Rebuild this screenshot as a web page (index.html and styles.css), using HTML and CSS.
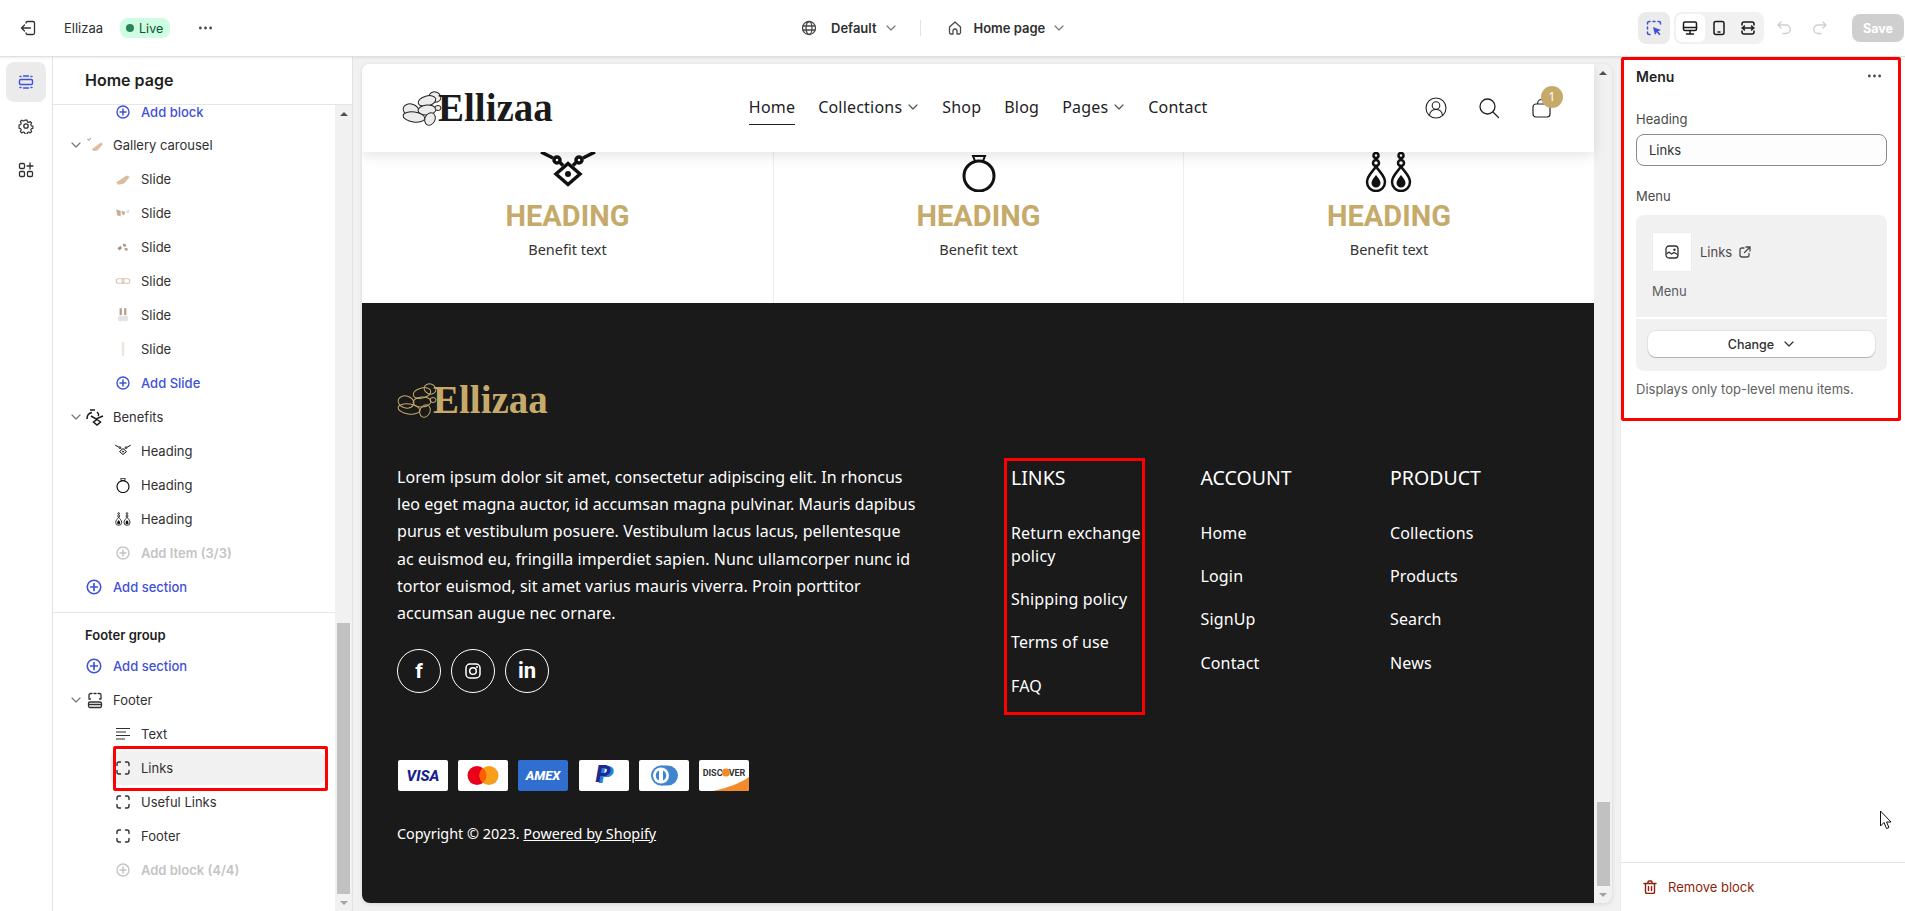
FILE: index.html
```html
<!DOCTYPE html>
<html lang="en">
<head>
    <meta charset="UTF-8">
    <meta name="viewport" content="width=device-width, initial-scale=1.0">
    <title>Ellizaa - Home page</title>
    <link rel="stylesheet" href="styles.css">
</head>
<body>
    <!-- shared icons -->
    <svg class="icon-sprite" aria-hidden="true">
        <symbol id="i-plus" viewBox="0 0 16 16"><circle cx="8" cy="8" r="6" fill="none" stroke="currentColor" stroke-width="1.400"/><path d="M8 5v6M5 8h6" fill="none" stroke="currentColor" stroke-width="1.500" stroke-linecap="round"/></symbol>
        <symbol id="i-chev" viewBox="0 0 12 12"><path d="M2 4l4 4 4-4" fill="none" stroke="currentColor" stroke-width="1.200" stroke-linecap="round" stroke-linejoin="round"/></symbol>
        <symbol id="i-block" viewBox="0 0 16 16"><path d="M2 5.500V4a2 2 0 0 1 2-2h1.500M10.500 2H12a2 2 0 0 1 2 2v1.500M14 10.500V12a2 2 0 0 1-2 2h-1.500M5.500 14H4a2 2 0 0 1-2-2v-1.500" fill="none" stroke="currentColor" stroke-width="1.400" stroke-linecap="round"/></symbol>
        <symbol id="i-dots" viewBox="0 0 16 4"><circle cx="2.500" cy="2" r="1.500" fill="currentColor"/><circle cx="8" cy="2" r="1.500" fill="currentColor"/><circle cx="13.500" cy="2" r="1.500" fill="currentColor"/></symbol>
        <symbol id="i-jewel" viewBox="0 0 40 36"><g stroke="currentColor" stroke-width="1"><ellipse cx="33" cy="7" rx="6" ry="5" transform="rotate(20 33 7)"/><ellipse cx="25" cy="11" rx="9" ry="5" transform="rotate(-15 25 11)"/><ellipse cx="9" cy="20" rx="8" ry="6" transform="rotate(15 9 20)"/><ellipse cx="25" cy="20" rx="9" ry="5" transform="rotate(-5 25 20)"/><ellipse cx="12" cy="27" rx="11" ry="5" transform="rotate(8 12 27)"/><ellipse cx="28" cy="29" rx="5" ry="6.500" transform="rotate(25 28 29)"/><ellipse cx="36" cy="18" rx="3" ry="2.500"/></g></symbol>
        <symbol id="i-necklace" viewBox="0 0 56 40"><g fill="none" stroke="currentColor" stroke-width="3.500"><path d="M1 0l12 6M55 0L43 6"/><circle cx="17" cy="8" r="3"/><circle cx="39" cy="8" r="3"/><path d="M20 10.500l3 3M36 10.500l-3 3"/><path d="M28 11.500l12 10.500-12 10.500-12-10.500z"/></g><circle cx="28" cy="22" r="3" fill="currentColor"/></symbol>
        <symbol id="i-ring" viewBox="0 0 40 40"><g fill="none" stroke="currentColor" stroke-width="3"><circle cx="20" cy="24" r="15"/><path d="M14 4h12l-2 5h-8z" stroke-width="2"/><path d="M17 9l-3 2M23 9l3 2" stroke-width="2"/></g></symbol>
        <symbol id="i-earrings" viewBox="0 0 48 40"><g fill="none" stroke="currentColor" stroke-width="2.500"><circle cx="11" cy="3.500" r="2.500"/><circle cx="11" cy="11" r="3"/><path d="M11 14.500c-4 6-9 9.500-9 15.500a9 9 0 0 0 18 0c0-6-5-9.500-9-15.500z"/><circle cx="36" cy="3.500" r="2.500"/><circle cx="36" cy="11" r="3"/><path d="M36 14.500c-4 6-9 9.500-9 15.500a9 9 0 0 0 18 0c0-6-5-9.500-9-15.500z"/></g><path d="M11 23c-2 3-4.500 5-4.500 8a4.500 4.500 0 0 0 9 0c0-3-2.500-5-4.500-8zM36 23c-2 3-4.500 5-4.500 8a4.500 4.500 0 0 0 9 0c0-3-2.500-5-4.500-8z" fill="currentColor"/></symbol>
    </svg>

    <header class="topbar">
        <div class="topbar-left">
            <svg class="ico-16" viewBox="0 0 16 16"><path d="M6 3V2.800A1.500 1.500 0 0 1 7.500 1.500h5.500A1.500 1.500 0 0 1 14.500 3v10a1.500 1.500 0 0 1-1.500 1.500H7.500A1.500 1.500 0 0 1 6 13M10.500 8H1.500M4.500 5l-3 3 3 3" fill="none" stroke="#303030" stroke-width="1.300" stroke-linecap="round" stroke-linejoin="round"/></svg>
            <span class="store-name">Ellizaa</span>
            <span class="live-badge"><i class="live-dot"></i>Live</span>
            <svg class="topbar-dots"><use href="#i-dots"/></svg>
        </div>
        <div class="topbar-center">
            <svg class="ico-16" viewBox="0 0 16 16"><g fill="none" stroke="#4a4a4a" stroke-width="1.300"><circle cx="8" cy="8" r="6.500"/><ellipse cx="8" cy="8" rx="3" ry="6.500"/><path d="M1.500 6h13M1.500 10h13"/></g></svg>
            <span class="picker-label picker-first">Default</span>
            <svg class="picker-chev"><use href="#i-chev"/></svg>
            <i class="picker-sep"></i>
            <svg class="ico-16" viewBox="0 0 16 16"><path d="M6 14H4a1.500 1.500 0 0 1-1.500-1.500V7L8 2l5.500 5v5.500A1.500 1.500 0 0 1 12 14h-2v-3a2 2 0 0 0-4 0z" fill="none" stroke="#4a4a4a" stroke-width="1.300" stroke-linejoin="round"/></svg>
            <span class="picker-label picker-second">Home page</span>
            <svg class="picker-chev"><use href="#i-chev"/></svg>
        </div>
        <div class="topbar-right">
            <button class="select-btn"><svg class="ico-16" viewBox="0 0 16 16"><path d="M1.500 4V3A1.500 1.500 0 0 1 3 1.500h1M7 1.500h2M12 1.500h1A1.500 1.500 0 0 1 14.500 3v1M1.500 7v2M1.500 12v1A1.500 1.500 0 0 0 3 14.500h1" fill="none" stroke="#3f51d8" stroke-width="1.500" stroke-linecap="round"/><path d="M7 7l8 3-3 1.300 2.500 3-1.200 1-2.500-3L9 15z" fill="#3f51d8"/></svg></button>
            <div class="view-group">
                <button class="view-btn view-on"><svg class="ico-16" viewBox="0 0 16 16"><rect x="1.500" y="2" width="13" height="8.500" rx="1.500" fill="none" stroke="#1a1a1a" stroke-width="1.500"/><path d="M1.500 7.500h13M8 10.500v3M4.500 14h7" stroke="#1a1a1a" stroke-width="1.500" fill="none" stroke-linecap="round"/></svg></button>
                <button class="view-btn"><svg class="ico-16" viewBox="0 0 16 16"><rect x="3" y="1.500" width="10" height="13" rx="2" fill="none" stroke="#1a1a1a" stroke-width="1.500"/><path d="M6.500 12h3" stroke="#1a1a1a" stroke-width="1.500"/></svg></button>
                <button class="view-btn"><svg class="ico-16" viewBox="0 0 16 16"><path d="M2 5V4a2 2 0 0 1 2-2h8a2 2 0 0 1 2 2v1M2 11v1a2 2 0 0 0 2 2h8a2 2 0 0 0 2-2v-1M2 8h12M4.500 6L2.500 8l2 2M11.500 6l2 2-2 2" fill="none" stroke="#1a1a1a" stroke-width="1.500" stroke-linecap="round" stroke-linejoin="round"/></svg></button>
            </div>
            <svg class="ico-16 undo-ico" viewBox="0 0 16 16"><path d="M5 2L2 5l3 3M2.500 5H10a4 4 0 0 1 0 8.500H7" fill="none" stroke="#cfcfcf" stroke-width="1.400" stroke-linecap="round" stroke-linejoin="round"/></svg>
            <svg class="ico-16 redo-ico" viewBox="0 0 16 16"><path d="M11 2l3 3-3 3M13.500 5H6a4 4 0 0 0 0 8.500h3" fill="none" stroke="#cfcfcf" stroke-width="1.400" stroke-linecap="round" stroke-linejoin="round"/></svg>
            <button class="save-btn">Save</button>
        </div>
    </header>

    <div class="editor">
        <nav class="rail">
            <button class="rail-btn rail-on"><svg class="ico-16" viewBox="0 0 16 16"><rect x="1.500" y="5.500" width="13" height="5" rx="1.200" fill="none" stroke="#3f51d8" stroke-width="1.400"/><path d="M2 2.500h1M5.500 2h5M13 2.500h1M2 13.500h1M5.500 14h5M13 13.500h1" stroke="#3f51d8" stroke-width="1.400" stroke-linecap="round"/></svg></button>
            <button class="rail-btn"><svg class="ico-16" viewBox="0 0 16 16"><g fill="none" stroke="#303030" stroke-width="1.300" stroke-linejoin="round"><circle cx="8" cy="8" r="2.200"/><path d="M6.800 1.500h2.400l.4 1.900 1.400.6 1.700-1 1.600 1.700-1 1.600.6 1.500 1.800.4v2.400l-1.800.4-.6 1.400 1 1.700-1.600 1.600-1.700-1-1.400.6-.4 1.800H6.800l-.4-1.800-1.400-.6-1.700 1-1.600-1.600 1-1.700-.6-1.400-1.800-.4V6.700l1.800-.4.600-1.500-1-1.600 1.600-1.700 1.700 1 1.400-.6z" transform="translate(.8 .8) scale(.9)"/></g></svg></button>
            <button class="rail-btn"><svg class="ico-16" viewBox="0 0 16 16"><g fill="none" stroke="#303030" stroke-width="1.300"><rect x="1.500" y="1.500" width="5" height="5" rx="1.200"/><rect x="1.500" y="9.500" width="5" height="5" rx="1.200"/><rect x="9.500" y="9.500" width="5" height="5" rx="1.200"/><path d="M12 1v6M9 4h6" stroke-linecap="round"/></g></svg></button>
        </nav>

        <aside class="sidebar">
            <h2 class="sidebar-title">Home page</h2>
            <div class="tree-wrap">
                <div class="tree">
                    <div class="tree-list">
                        <div class="row row-add row-sub row-clipped"><svg class="row-ico"><use href="#i-plus"/></svg>Add block</div>
                        <div class="row row-section"><svg class="row-chev"><use href="#i-chev"/></svg><svg class="sec-ico" viewBox="0 0 18 14"><path d="M1.500 1l2 1.500M4 0l.5 1.500" stroke="#b79a78" stroke-width="1.200"/><path d="M6 11l9-6.500 2 1.500-5.500 6.500-4.500.5z" fill="#dcbfa3"/></svg>Gallery carousel</div>
                        <div class="row row-block"><svg class="row-ico" viewBox="0 0 14 14"><path d="M1 10l9-6 3 1-5 6-5 1z" fill="#d9bda2"/></svg>Slide</div>
                        <div class="row row-block"><svg class="row-ico" viewBox="0 0 14 14"><path d="M1 4l4 1v5l-3-1zM6 5l3 1-1 3-2-1z" fill="#c9ad96"/><path d="M10 5l3-1-1 3-2 0z" fill="#ddd"/></svg>Slide</div>
                        <div class="row row-block"><svg class="row-ico" viewBox="0 0 14 14"><path d="M2 8l3-2 1 2-2 2zM7 4l3 1-1 2-2-1zM8 8l3 0 0 2-2 0z" fill="#a99384"/></svg>Slide</div>
                        <div class="row row-block"><svg class="row-ico" viewBox="0 0 14 14"><g fill="none" stroke="#dbc6b3"><rect x="1" y="5" width="7" height="4" rx="2"/><rect x="6" y="5" width="7" height="4" rx="2"/></g></svg>Slide</div>
                        <div class="row row-block"><svg class="row-ico" viewBox="0 0 14 14"><path d="M4 1h2v6H4zM8 1h2v6H8z" fill="#b99d87"/><circle cx="5" cy="10" r="2.500" fill="#e3e3e3"/><circle cx="9" cy="10" r="2.500" fill="#e3e3e3"/></svg>Slide</div>
                        <div class="row row-block"><svg class="row-ico" viewBox="0 0 14 14"><path d="M6 1h2v12H6z" fill="#f0e3da"/></svg>Slide</div>
                        <div class="row row-add row-sub"><svg class="row-ico"><use href="#i-plus"/></svg>Add Slide</div>
                        <div class="row row-section"><svg class="row-chev"><use href="#i-chev"/></svg><svg class="sec-ico bene-ico" viewBox="0 0 18 18"><g fill="none" stroke="#1a1a1a" stroke-width="1.500"><path d="M1 11c0-4 2-6 5-6.500M4 2h5M11 4c2 2 2 3 1 4"/><path d="M5 8l5 3 7-3M11 11.500l3.500 2.500-3.500 3-3.500-3z"/></g></svg>Benefits</div>
                        <div class="row row-block"><svg class="row-ico bene-ico"><use href="#i-necklace"/></svg>Heading</div>
                        <div class="row row-block"><svg class="row-ico bene-ico"><use href="#i-ring"/></svg>Heading</div>
                        <div class="row row-block"><svg class="row-ico bene-ico"><use href="#i-earrings"/></svg>Heading</div>
                        <div class="row row-add row-sub row-off"><svg class="row-ico"><use href="#i-plus"/></svg>Add Item (3/3)</div>
                        <div class="row row-add"><svg class="sec-ico"><use href="#i-plus"/></svg>Add section</div>
                    </div>
                    <h3 class="group-title">Footer group</h3>
                    <div class="row row-add"><svg class="sec-ico"><use href="#i-plus"/></svg>Add section</div>
                    <div class="row row-section"><svg class="row-chev"><use href="#i-chev"/></svg><svg class="sec-ico" viewBox="0 0 18 18"><path d="M3 8V4A1.500 1.500 0 0 1 4.500 2.500H6M12 2.500h1.500A1.500 1.500 0 0 1 15 4v4M8 2.500h2M3 8h1.500M13.500 8H15M4 11h10a1.500 1.500 0 0 1 1.500 1.500V15a1.500 1.500 0 0 1-1.500 1.500H4A1.500 1.500 0 0 1 2.500 15v-2.500A1.500 1.500 0 0 1 4 11zM2.500 13.500h13" fill="none" stroke="#303030" stroke-width="1.300" stroke-linecap="round"/></svg>Footer</div>
                    <div class="row row-block"><svg class="row-ico" viewBox="0 0 16 16"><path d="M1 2.500h14M1 6h10M1 9.500h14M1 13h9" stroke="#303030" stroke-width="1.200"/></svg>Text</div>
                    <div class="row row-block row-current"><svg class="row-ico"><use href="#i-block"/></svg>Links<span class="red-mark"></span></div>
                    <div class="row row-block"><svg class="row-ico"><use href="#i-block"/></svg>Useful Links</div>
                    <div class="row row-block"><svg class="row-ico"><use href="#i-block"/></svg>Footer</div>
                    <div class="row row-add row-sub row-off"><svg class="row-ico"><use href="#i-plus"/></svg>Add block (4/4)</div>
                </div>
                <div class="scrollbar tree-scroll">
                    <i class="arrow-up"></i>
                    <i class="scroll-thumb"></i>
                    <i class="arrow-down"></i>
                </div>
            </div>
        </aside>

        <main class="preview">
            <div class="frame">
                <div class="page">
                    <div class="shop-header">
                        <a class="shop-logo"><svg class="logo-mark"><use href="#i-jewel"/></svg><span class="logo-text">Ellizaa</span></a>
                        <ul class="shop-nav">
                            <li class="nav-on">Home</li>
                            <li>Collections<svg class="nav-chev"><use href="#i-chev"/></svg></li>
                            <li>Shop</li>
                            <li>Blog</li>
                            <li>Pages<svg class="nav-chev"><use href="#i-chev"/></svg></li>
                            <li>Contact</li>
                        </ul>
                        <div class="shop-icons">
                            <svg class="shop-ico" viewBox="0 0 22 22"><g fill="none" stroke="#222" stroke-width="1.100"><circle cx="11" cy="11" r="10"/><circle cx="11" cy="8.500" r="3.800"/><path d="M4.500 18c.8-4 3.500-5.500 6.500-5.500s5.700 1.500 6.500 5.500"/></g></svg>
                            <svg class="shop-ico" viewBox="0 0 22 22"><g fill="none" stroke="#222" stroke-width="1.300" stroke-linecap="round"><circle cx="9.500" cy="9.500" r="7.500"/><path d="M15 15l5.500 5.500"/></g></svg>
                            <span class="cart">
                                <svg class="shop-ico" viewBox="0 0 22 22"><g fill="none" stroke="#222" stroke-width="1.200"><rect x="2" y="7" width="17" height="13" rx="3"/><path d="M6.500 7c0-6 8-6 8 0"/></g></svg>
                                <b class="cart-count">1</b>
                            </span>
                        </div>
                    </div>

                    <section class="benefits">
                        <div class="benefit">
                            <svg class="benefit-ico necklace-ico"><use href="#i-necklace"/></svg>
                            <h3 class="benefit-title">HEADING</h3>
                            <p class="benefit-text">Benefit text</p>
                        </div>
                        <div class="benefit">
                            <svg class="benefit-ico ring-ico"><use href="#i-ring"/></svg>
                            <h3 class="benefit-title">HEADING</h3>
                            <p class="benefit-text">Benefit text</p>
                        </div>
                        <div class="benefit">
                            <svg class="benefit-ico earring-ico"><use href="#i-earrings"/></svg>
                            <h3 class="benefit-title">HEADING</h3>
                            <p class="benefit-text">Benefit text</p>
                        </div>
                    </section>

                    <footer class="shop-footer">
                        <a class="footer-logo"><svg class="logo-mark"><use href="#i-jewel"/></svg><span class="logo-text">Ellizaa</span></a>
                        <div class="footer-row">
                            <div class="footer-about">
                                <p class="about-text">Lorem ipsum dolor sit amet, consectetur adipiscing elit. In rhoncus<br>leo eget magna auctor, id accumsan magna pulvinar. Mauris dapibus<br>purus et vestibulum posuere. Vestibulum lacus lacus, pellentesque<br>ac euismod eu, fringilla imperdiet sapien. Nunc ullamcorper nunc id<br>tortor euismod, sit amet varius mauris viverra. Proin porttitor<br>accumsan augue nec ornare.</p>
                                <div class="socials">
                                    <a class="social social-f">f</a>
                                    <a class="social"><svg class="ig-ico" viewBox="0 0 16 16"><g fill="none" stroke="#fff" stroke-width="1.500"><rect x="1" y="1" width="14" height="14" rx="4"/><circle cx="8" cy="8" r="3.300"/></g><circle cx="12" cy="4" r="1" fill="#fff"/></svg></a>
                                    <a class="social social-in">in</a>
                                </div>
                            </div>
                            <div class="footer-col footer-col-marked">
                                <h4 class="col-title">LINKS</h4>
                                <a class="col-link">Return exchange<br>policy</a>
                                <a class="col-link">Shipping policy</a>
                                <a class="col-link">Terms of use</a>
                                <a class="col-link">FAQ</a>
                            </div>
                            <div class="footer-col">
                                <h4 class="col-title">ACCOUNT</h4>
                                <a class="col-link">Home</a>
                                <a class="col-link">Login</a>
                                <a class="col-link">SignUp</a>
                                <a class="col-link">Contact</a>
                            </div>
                            <div class="footer-col">
                                <h4 class="col-title">PRODUCT</h4>
                                <a class="col-link">Collections</a>
                                <a class="col-link">Products</a>
                                <a class="col-link">Search</a>
                                <a class="col-link">News</a>
                            </div>
                        </div>
                        <div class="payments">
                            <svg class="pay" viewBox="0 0 50 31"><rect width="50" height="31" rx="2" fill="#fff"/><text x="25" y="21" text-anchor="middle" class="pay-visa">VISA</text></svg>
                            <svg class="pay" viewBox="0 0 50 31"><rect width="50" height="31" rx="2" fill="#fff"/><circle cx="19" cy="15.500" r="9.500" fill="#eb001b"/><circle cx="31" cy="15.500" r="9.500" fill="#f79e1b"/><path d="M25 8.100a9.500 9.500 0 0 1 0 14.800 9.500 9.500 0 0 1 0-14.800z" fill="#ff5f00"/></svg>
                            <svg class="pay" viewBox="0 0 50 31"><rect width="50" height="31" rx="2" fill="#306fd0"/><text x="25" y="20" text-anchor="middle" class="pay-amex">AMEX</text></svg>
                            <svg class="pay" viewBox="0 0 50 31"><rect width="50" height="31" rx="2" fill="#fff"/><text x="27" y="23" text-anchor="middle" class="pay-pp pay-pp-light">P</text><text x="24" y="22" text-anchor="middle" class="pay-pp">P</text></svg>
                            <svg class="pay" viewBox="0 0 50 31"><rect width="50" height="31" rx="2" fill="#fff"/><path d="M22 5.500h7a10 10 0 0 1 0 20h-7z" fill="#4186cd"/><circle cx="22" cy="15.500" r="10" fill="#4186cd"/><circle cx="22" cy="15.500" r="8" fill="#fff"/><path d="M20 10.500a5.500 5.500 0 0 0 0 10zM24 10.500a5.500 5.500 0 0 1 0 10z" fill="#4186cd"/></svg>
                            <svg class="pay" viewBox="0 0 50 31"><rect width="50" height="31" rx="2" fill="#fff"/><path d="M14 31C28 28 42 23 50 17v12a2 2 0 0 1-2 2z" fill="#f48a2c"/><text x="25" y="16" text-anchor="middle" class="pay-disc">DISCOVER</text><circle cx="27" cy="12.500" r="4" fill="#f48a2c"/></svg>
                        </div>
                        <p class="copyright">Copyright © 2023. <a class="copy-link">Powered by Shopify</a></p>
                    </footer>
                </div>
                <div class="scrollbar page-scroll">
                    <i class="arrow-up"></i>
                    <i class="scroll-thumb"></i>
                    <i class="arrow-down"></i>
                </div>
            </div>
        </main>

        <aside class="panel">
            <section class="panel-box">
                <div class="panel-head">
                    <h3 class="panel-title">Menu</h3>
                    <svg class="panel-dots"><use href="#i-dots"/></svg>
                </div>
                <label class="field-label label-heading">Heading</label>
                <div class="text-input">Links</div>
                <label class="field-label label-menu">Menu</label>
                <div class="menu-card">
                    <div class="menu-card-top">
                        <div class="menu-pick">
                            <span class="menu-thumb"><svg class="ico-14" viewBox="0 0 14 14"><g fill="none" stroke="#303030" stroke-width="1.300"><rect x="1" y="1" width="12" height="12" rx="3"/><path d="M1.500 9l2.500-2 2.500 2 2.500-1.500 3.500 2"/></g><circle cx="9.500" cy="4.800" r="1.200" fill="#303030"/></svg></span>
                            <span class="menu-name">Links</span>
                            <svg class="ico-12" viewBox="0 0 12 12"><path d="M5 2H3a2 2 0 0 0-2 2v5a2 2 0 0 0 2 2h5a2 2 0 0 0 2-2V7.500M7 1h4v4M11 1L5.500 6.500" fill="none" stroke="#4a4a4a" stroke-width="1.300" stroke-linecap="round"/></svg>
                        </div>
                        <div class="menu-type">Menu</div>
                    </div>
                    <div class="menu-card-bottom">
                        <button class="change-btn">Change<svg class="change-chev"><use href="#i-chev"/></svg></button>
                    </div>
                </div>
                <p class="panel-hint">Displays only top-level menu items.</p>
            </section>
            <div class="panel-foot">
                <svg class="ico-14" viewBox="0 0 14 14"><path d="M1 3.500h12M5 3.500V2a1 1 0 0 1 1-1h2a1 1 0 0 1 1 1v1.500M2.500 3.500V12a1.500 1.500 0 0 0 1.500 1.500h6a1.500 1.500 0 0 0 1.500-1.500V3.500M5.500 6.500v4M8.500 6.500v4" fill="none" stroke="#8e1f0b" stroke-width="1.400" stroke-linecap="round"/></svg>
                <span>Remove block</span>
            </div>
            <svg class="cursor" viewBox="0 0 12 20"><path d="M1 1v15l3.500-3.500L7 18.500l2.500-1L7 12h4.500z" fill="#fff" stroke="#111" stroke-width="1"/></svg>
        </aside>
    </div>
</body>
</html>
```

FILE: styles.css
```css
* {
    box-sizing: border-box;
}
html, body {
    height: 100%;
}
body {
    margin: 0;
    overflow: hidden;
    display: flex;
    flex-direction: column;
    font-family: Inter, "Liberation Sans", sans-serif;
    font-size: 13px;
    color: #303030;
    background: #f1f1f1;
}
h2, h3, h4, p, ul {
    margin: 0;
    padding: 0;
}
button {
    border: none;
    padding: 0;
    font: inherit;
    background: none;
    display: flex;
    align-items: center;
    justify-content: center;
}
svg {
    display: block;
    flex: none;
}
.icon-sprite {
    width: 0;
    height: 0;
    position: absolute;
}
.ico-16 { width: 16px; height: 16px; }
.ico-14 { width: 14px; height: 14px; }
.ico-12 { width: 12px; height: 12px; }

/* top bar */
.topbar {
    flex: none;
    height: 57px;
    display: flex;
    align-items: center;
    background: #fff;
    border-bottom: 1px solid #e0e0e0;
    box-shadow: 0 1px 2px rgba(0, 0, 0, 0.08);
    position: relative;
    z-index: 3;
}
.topbar-left {
    width: 801px;
    padding-left: 20px;
    display: flex;
    align-items: center;
}
.store-name {
    margin-left: 28px;
}
.live-badge {
    margin-left: 17px;
    width: 50px;
    height: 20px;
    display: flex;
    align-items: center;
    padding-left: 6px;
    border-radius: 8px;
    background: #cdfee1;
    color: #0c5132;
    font-size: 12.500px;
}
.live-dot {
    width: 8px;
    height: 8px;
    margin-right: 5px;
    border-radius: 50%;
    background: #29845a;
}
.topbar-dots {
    width: 15px;
    height: 4px;
    margin-left: 28px;
    color: #4a4a4a;
}
.topbar-center {
    display: flex;
    align-items: center;
}
.picker-label {
    font-weight: 600;
    font-size: 13px;
    color: #303030;
}
.picker-first { margin-left: 14px; }
.picker-second { margin-left: 11px; }
.picker-chev {
    width: 12px;
    height: 12px;
    margin-left: 8px;
    color: #7a7a7a;
}
.picker-sep {
    width: 1px;
    height: 16px;
    margin: 0 26px 0 23px;
    background: #e3e3e3;
}
.topbar-right {
    margin-left: auto;
    display: flex;
    align-items: center;
}
.select-btn {
    width: 32px;
    height: 32px;
    border-radius: 8px;
    background: #ebebeb;
}
.view-group {
    margin-left: 4px;
    width: 90px;
    height: 32px;
    padding: 2px;
    display: flex;
    border-radius: 8px;
    background: #f1f1f1;
}
.view-btn {
    width: 29px;
    height: 28px;
    border-radius: 6px;
}
.view-on {
    background: #fff;
}
.undo-ico { margin-left: 12px; }
.redo-ico { margin-left: 20px; }
.save-btn {
    margin: 0 1px 0 24px;
    width: 52px;
    height: 28px;
    border-radius: 8px;
    background: #cfcfcf;
    color: #fff;
    font-weight: 700;
    font-size: 12.500px;
}

/* editor columns */
.editor {
    flex: 1;
    min-height: 0;
    display: flex;
}
.rail {
    flex: none;
    width: 53px;
    padding: 5px 6px;
    background: #fff;
    border-right: 1px solid #e3e3e3;
    display: flex;
    flex-direction: column;
    gap: 4px;
}
.rail-btn {
    width: 40px;
    height: 40px;
    border-radius: 8px;
}
.rail-on {
    background: #ebebeb;
}

/* sections sidebar */
.sidebar {
    flex: none;
    width: 300px;
    display: flex;
    flex-direction: column;
    background: #fff;
    border-right: 1px solid #e3e3e3;
}
.sidebar-title {
    flex: none;
    height: 48px;
    padding-left: 32px;
    line-height: 47px;
    font-size: 16px;
    font-weight: 600;
    color: #1f1f1f;
    border-bottom: 1px solid #e6e6e6;
}
.tree-wrap {
    flex: 1;
    min-height: 0;
    display: flex;
}
.tree {
    flex: 1;
    min-width: 0;
    overflow: hidden;
}
.tree-list {
    padding-bottom: 8px;
    border-bottom: 1px solid #e6e6e6;
}
.row {
    height: 34px;
    display: flex;
    align-items: center;
    white-space: nowrap;
}
/* first row is scrolled partly out of view */
.row-clipped {
    height: 14px;
    margin-bottom: 9px;
    line-height: 14px;
}
.row-chev {
    width: 12px;
    height: 12px;
    color: #7a7a7a;
}
.row-section {
    padding-left: 17px;
}
.sec-ico {
    width: 18px;
    height: 18px;
    margin: 0 9px 0 4px;
}
.row-block,
.row-sub {
    width: 215px;
    margin-left: 57px;
    padding-left: 5px;
    border-radius: 8px;
}
.row-ico {
    width: 16px;
    height: 16px;
    margin-right: 10px;
    color: #303030;
}
.bene-ico {
    color: #111;
}
.row-add {
    color: #3f51d8;
    font-weight: 500;
}
.row-add .row-ico {
    color: #3f51d8;
}
.row-add:not(.row-sub) {
    padding-left: 32px;
}
.row-add:not(.row-sub) .sec-ico {
    margin-left: 0;
    width: 18px;
    height: 18px;
    margin-right: 10px;
}
.row-off,
.row-off .row-ico {
    color: #c4c4c4;
    font-weight: 600;
}
.row-current {
    position: relative;
    background: #f1f1f1;
}
.red-mark {
    position: absolute;
    left: 3px;
    right: -3px;
    top: -5px;
    bottom: -6px;
    border: 3px solid #f00;
    border-radius: 2px;
}
.group-title {
    padding: 12px 0 4px 32px;
    line-height: 20px;
    font-size: 13px;
    font-weight: 600;
    color: #1f1f1f;
}

/* fake scrollbars */
.scrollbar {
    flex: none;
    display: flex;
    flex-direction: column;
    align-items: center;
    background: #f1f1f1;
}
.tree-scroll {
    width: 17px;
}
.page-scroll {
    width: 18px;
}
.arrow-up,
.arrow-down {
    flex: none;
    width: 0;
    height: 0;
    margin: 7px 0 6px;
    border-left: 4px solid transparent;
    border-right: 4px solid transparent;
}
.arrow-up {
    border-bottom: 4px solid #505050;
}
.arrow-down {
    border-top: 4px solid #a3a3a3;
}
.scroll-thumb {
    margin-top: auto;
    width: 13px;
    background: #c1c1c1;
}
.tree-scroll .scroll-thumb {
    height: 271px;
}
.page-scroll .scroll-thumb {
    height: 84px;
}

/* store preview */
.preview {
    flex: 1;
    min-width: 0;
    padding: 7px 8px 8px 9px;
}
.frame {
    height: 100%;
    display: flex;
    border-radius: 8px;
    overflow: hidden;
    box-shadow: 0 1px 4px rgba(0, 0, 0, 0.12);
}
.page {
    flex: 1;
    min-width: 0;
    display: flex;
    flex-direction: column;
    font-family: "Noto Sans", Roboto, sans-serif;
    background: #fff;
}
.shop-header {
    flex: none;
    height: 88px;
    display: flex;
    align-items: center;
    padding-left: 40px;
    background: #fff;
    box-shadow: 0 4px 12px rgba(0, 0, 0, 0.1);
    position: relative;
    z-index: 1;
}
.shop-logo,
.footer-logo {
    display: flex;
    align-items: center;
}
.logo-mark {
    width: 40px;
    height: 36px;
}
.shop-logo .logo-mark {
    color: #222;
    fill: #ececec;
}
.logo-text {
    margin-left: -4px;
    font-family: "Liberation Serif", serif;
    font-weight: 700;
    font-size: 39px;
    line-height: 50px;
}
.shop-logo .logo-text {
    color: #1a1a1a;
}
.shop-nav {
    margin-left: 196px;
    list-style: none;
    display: flex;
    align-items: center;
    gap: 23px;
    font-size: 16px;
    letter-spacing: 0.2px;
    color: #222;
}
.shop-nav li {
    display: flex;
    align-items: center;
    height: 34px;
    padding-bottom: 2px;
}
.nav-on {
    border-bottom: 1px solid #222;
}
.nav-chev {
    width: 12px;
    height: 12px;
    margin-left: 5px;
    color: #555;
}
.shop-icons {
    margin-left: auto;
    margin-right: 41px;
    display: flex;
    align-items: center;
    gap: 31px;
}
.shop-ico {
    width: 22px;
    height: 22px;
}
.cart {
    position: relative;
}
.cart-count {
    position: absolute;
    top: -11px;
    right: -10px;
    width: 22px;
    height: 22px;
    border-radius: 50%;
    background: #c5aa6a;
    color: #fff;
    font-size: 12px;
    font-weight: 400;
    line-height: 22px;
    text-align: center;
}
.benefits {
    flex: none;
    height: 151px;
    display: grid;
    grid-template-columns: 412px 410px 1fr;
}
.benefit {
    display: flex;
    flex-direction: column;
    align-items: center;
    border-right: 1px solid #eee;
    color: #111;
}
.benefit:last-child {
    border-right: none;
}
.benefit-ico {
    height: 40px;
}
.necklace-ico { width: 56px; }
.ring-ico { width: 40px; }
.earring-ico { width: 48px; }
.benefit-title {
    margin-top: 7px;
    font-family: Roboto, sans-serif;
    font-size: 29px;
    font-weight: 700;
    line-height: 34px;
    color: #c5aa6a;
}
.benefit-text {
    margin-top: 6px;
    font-size: 14.500px;
    line-height: 20px;
    color: #333;
}
.shop-footer {
    flex: 1;
    padding: 72px 35px 0;
    background: #1a1a1a;
    color: #fff;
}
.footer-logo {
    height: 50px;
    margin-bottom: 39px;
}
.footer-logo .logo-mark {
    color: #c5aa6a;
    fill: none;
}
.footer-logo .logo-text {
    color: #c5aa6a;
}
.footer-row {
    display: flex;
    align-items: flex-start;
}
.footer-about {
    flex: none;
    width: 614px;
}
.about-text {
    font-size: 16px;
    line-height: 27.200px;
    letter-spacing: 0.06px;
    white-space: nowrap;
}
.socials {
    margin-top: 22px;
    display: flex;
    gap: 10px;
}
.social {
    width: 44px;
    height: 44px;
    border: 1px solid #fff;
    border-radius: 50%;
    display: flex;
    align-items: center;
    justify-content: center;
    font-family: Roboto, sans-serif;
    font-weight: 700;
    line-height: 1;
}
.social-f { font-size: 21px; }
.social-in { font-size: 22px; }
.ig-ico {
    width: 16px;
    height: 16px;
}
.footer-col {
    flex: none;
    width: 127px;
    margin-top: 1px;
    margin-right: 62.500px;
    display: flex;
    flex-direction: column;
    gap: 20.200px;
    white-space: nowrap;
    font-size: 16px;
    line-height: 23px;
    letter-spacing: 0.15px;
}
.footer-col:last-child {
    margin-right: 0;
}
.footer-col-marked {
    padding-bottom: 10px;
    outline: 3px solid #f00;
    outline-offset: 4px;
}
.col-title {
    font-size: 19.500px;
    font-weight: 400;
    line-height: 26px;
    letter-spacing: 0;
    margin-bottom: 10.800px;
}
.payments {
    margin-top: 52px;
    margin-left: 1px;
    display: flex;
    gap: 10.200px;
}
.pay {
    width: 50px;
    height: 31px;
}
.pay-visa {
    font: italic 800 15px Roboto, sans-serif;
    fill: #1a1f8f;
}
.pay-amex {
    font: italic 800 13px Roboto, sans-serif;
    fill: #fff;
}
.pay-pp {
    font: italic 800 24px Roboto, sans-serif;
    fill: #1b2a8f;
}
.pay-pp-light {
    fill: #2a7fd0;
}
.pay-disc {
    font: 700 9px Roboto, sans-serif;
    fill: #333;
}
.copyright {
    margin-top: 32px;
    font-size: 14.400px;
    line-height: 22px;
}
.copy-link {
    text-decoration: underline;
}

/* settings panel */
.panel {
    flex: none;
    width: 285px;
    display: flex;
    flex-direction: column;
    background: #fff;
    border-left: 1px solid #ececec;
    position: relative;
}
.panel-box {
    width: 280px;
    height: 364px;
    padding: 6px 11px 0 12px;
    border: 3px solid #f00;
    border-radius: 2px;
}
.panel-head {
    height: 20px;
    display: flex;
    align-items: center;
    justify-content: space-between;
}
.panel-title {
    font-size: 14px;
    font-weight: 600;
    color: #1f1f1f;
}
.panel-dots {
    width: 15px;
    height: 4px;
    margin-right: 5px;
    color: #4a4a4a;
}
.field-label {
    display: block;
    line-height: 18px;
    color: #4a4a4a;
}
.label-heading { margin-top: 24px; }
.label-menu { margin-top: 21px; }
.text-input {
    margin-top: 6px;
    height: 32px;
    padding-left: 12px;
    line-height: 30px;
    border: 1px solid #8a8a8a;
    border-radius: 8px;
    background: #fdfdfd;
}
.menu-card {
    margin-top: 10px;
    height: 156px;
    border-radius: 8px;
    background: #f1f1f1;
    overflow: hidden;
}
.menu-card-top {
    height: 104px;
    padding: 17px 16px 0;
    border-bottom: 2px solid #fff;
}
.menu-pick {
    display: flex;
    align-items: center;
    color: #4a4a4a;
}
.menu-thumb {
    width: 40px;
    height: 40px;
    margin-right: 8px;
    display: flex;
    align-items: center;
    justify-content: center;
    background: #fff;
    border: 1px solid #ececec;
}
.menu-name {
    margin-right: 7px;
}
.menu-type {
    margin-top: 10px;
    line-height: 18px;
    color: #5c5c5c;
}
.menu-card-bottom {
    padding: 12px 12px 0;
}
.change-btn {
    width: 100%;
    height: 26px;
    border-radius: 8px;
    background: #fff;
    box-shadow: 0 1px 0 #b5b5b5, 0 0 0 1px #e3e3e3;
    font-weight: 500;
    font-size: 12.500px;
    color: #303030;
}
.change-chev {
    width: 12px;
    height: 12px;
    margin-left: 9px;
    color: #303030;
}
.panel-hint {
    margin-top: 9px;
    line-height: 18px;
    color: #616161;
}
.panel-foot {
    margin-top: auto;
    height: 49px;
    padding-left: 22px;
    display: flex;
    align-items: center;
    gap: 11px;
    border-top: 1px solid #e3e3e3;
    color: #8e1f0b;
}
.cursor {
    position: absolute;
    right: 13px;
    bottom: 81px;
    width: 13px;
    height: 20px;
}
```
